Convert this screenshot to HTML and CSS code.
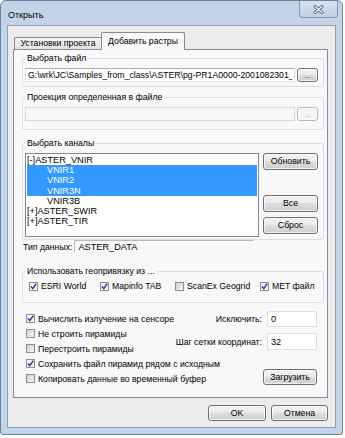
FILE: index.html
```html
<!DOCTYPE html>
<html lang="ru">
<head>
    <meta charset="UTF-8">
    <link rel="stylesheet" href="styles.css">
    <title>Открыть</title>
</head>
<body>

<div class="window">
    <div class="titlebar">
        <span class="title">Открыть</span>
        <div class="close">
            <svg width="11" height="9" viewBox="0 0 11 9">
                <path d="M2 1.5l7 6M9 1.5l-7 6" stroke="#55647a" stroke-width="3" stroke-linecap="round"/>
                <path d="M2 1.5l7 6M9 1.5l-7 6" stroke="#f4f6f8" stroke-width="1.3" stroke-linecap="round"/>
            </svg>
        </div>
    </div>

    <div class="client">
        <div class="tabs">
            <div class="tab">Установки проекта</div>
            <div class="tab active">Добавить растры</div>
        </div>

        <div class="panel">
            <fieldset class="group g-file">
                <legend>Выбрать файл</legend>
                <div class="file-row">
                    <input class="edit path" type="text" value="G:\wrk\JC\Samples_from_class\ASTER\pg-PR1A0000-2001082301_">
                    <button class="btn dots">...</button>
                </div>
            </fieldset>

            <fieldset class="group g-proj">
                <legend>Проекция определенная в файле</legend>
                <div class="file-row">
                    <input class="edit" type="text" disabled>
                    <button class="btn dots" disabled>...</button>
                </div>
            </fieldset>

            <fieldset class="group g-bands">
                <legend>Выбрать каналы</legend>
                <div class="bands-row">
                    <div class="listbox">
                        <div class="item">[-]ASTER_VNIR</div>
                        <div class="item sub sel">VNIR1</div>
                        <div class="item sub sel">VNIR2</div>
                        <div class="item sub sel">VNIR3N</div>
                        <div class="item sub">VNIR3B</div>
                        <div class="item">[+]ASTER_SWIR</div>
                        <div class="item">[+]ASTER_TIR</div>
                    </div>
                    <div class="band-buttons">
                        <button class="btn">Обновить</button>
                        <button class="btn push">Все</button>
                        <button class="btn">Сброс</button>
                    </div>
                </div>
            </fieldset>

            <div class="type-row">
                <span>Тип данных:</span>
                <input class="type-edit" type="text" value="ASTER_DATA" readonly>
            </div>

            <fieldset class="group g-geo">
                <legend>Использовать геопривязку из ...</legend>
                <div class="geo-row">
                    <label class="check"><span class="cb on"></span>ESRI World</label>
                    <label class="check"><span class="cb on"></span>Mapinfo TAB</label>
                    <label class="check"><span class="cb"></span>ScanEx Geogrid</label>
                    <label class="check"><span class="cb on"></span>MET файл</label>
                </div>
            </fieldset>

            <div class="options">
                <div class="opt-list">
                    <label class="check"><span class="cb on"></span>Вычислить излучение на сенсоре</label>
                    <label class="check"><span class="cb"></span>Не строить пирамиды</label>
                    <label class="check"><span class="cb"></span>Перестроить пирамиды</label>
                    <label class="check"><span class="cb on"></span>Сохранить файл пирамид рядом с исходным</label>
                    <label class="check"><span class="cb"></span>Копировать данные во временный буфер</label>
                </div>
                <div class="opt-fields">
                    <div class="field">
                        <span>Исключить:</span>
                        <input class="num" type="text" value="0">
                    </div>
                    <div class="field tall">
                        <span>Шаг сетки координат:</span>
                        <input class="num" type="text" value="32">
                    </div>
                    <button class="btn load">Загрузить</button>
                </div>
            </div>
        </div>

        <div class="footer">
            <button class="btn ok">OK</button>
            <button class="btn cancel">Отмена</button>
        </div>
    </div>
</div>

</body>
</html>
```

FILE: styles.css
```css
* {
    box-sizing: border-box;
}
body {
    margin: 0;
    background: #fff;
    font-family: "Liberation Sans", Arial, sans-serif;
    font-size: 8.7px;
    color: #000;
}
.window {
    width: 343px;
    height: 435px;
    border: 1px solid #6f8199;
    border-radius: 6px 6px 3px 3px;
    background: #c4d4e8;
}
.titlebar {
    height: 24px;
    display: flex;
    justify-content: space-between;
    align-items: flex-start;
}
.title {
    padding: 8px 0 0 7px;
    font-size: 9px;
    line-height: 12px;
}
.close {
    width: 39px;
    height: 17px;
    margin-right: 4px;
    border: 1px solid #8496ae;
    border-top: 0;
    border-radius: 0 0 4px 4px;
    background: linear-gradient(#d9e3f0, #c0cfe3);
    display: flex;
    justify-content: center;
    align-items: center;
}
.client {
    height: 403px;
    margin: 0 6px;
    padding: 6px 7px 0 5px;
    border: 1px solid #8d9db2;
    background: #ececec;
}

/* tabs */
.tabs {
    display: flex;
    align-items: flex-end;
    height: 17px;
    padding-left: 1px;
}
.tab {
    width: 87px;
    height: 12px;
    border: 1px solid #898c95;
    border-bottom: 0;
    border-right: 0;
    border-radius: 2px 0 0 0;
    background: linear-gradient(#f4f4f4, #e2e2e2);
    text-align: center;
    line-height: 11px;
}
.tab.active {
    width: 84px;
    height: 18px;
    margin-bottom: -1px;
    padding-top: 2px;
    border-right: 1px solid #898c95;
    border-radius: 2px 2px 0 0;
    background: #f8f8f8;
    line-height: 12px;
    position: relative;
    z-index: 1;
}
.panel {
    height: 349px;
    padding: 2px 3px 0 8px;
    border: 1px solid #898c95;
    background: #f8f8f8;
}

/* group boxes */
.group {
    margin: 0;
    min-width: 0;
    padding: 4px 5px 4px 2px;
    border: 1px solid #d5dfe5;
    border-radius: 3px;
}
.group legend {
    padding: 0 2px;
    line-height: 12px;
}
.g-proj {
    margin-top: 4px;
    padding-bottom: 8px;
}
.g-bands {
    margin-top: 7px;
    padding-bottom: 2px;
}
.g-geo {
    margin-top: 12px;
    padding-top: 3px;
    padding-bottom: 10px;
}

/* edits and buttons */
.file-row {
    display: flex;
    gap: 2px;
}
.edit {
    flex: 1;
    min-width: 0;
    height: 14px;
    padding: 0 2px;
    border: 1px solid;
    border-color: #abadb3 #e2e3ea #e3e9ef #dbdfe6;
    background: #fff;
    font: inherit;
    color: #000;
}
.edit:disabled {
    border-color: #d6dadf;
    background: #f8f8f8;
}
.btn {
    height: 16px;
    padding: 0;
    border: 1px solid #707070;
    border-radius: 3px;
    background: linear-gradient(#f2f2f2 0%, #ebebeb 45%, #dddddd 50%, #cfcfcf 100%);
    box-shadow: inset 0 0 0 1px rgba(255, 255, 255, 0.7);
    font: inherit;
    color: #000;
    line-height: 13px;
}
.btn:disabled {
    border-color: #b6babd;
    background: #f4f4f4;
    color: #9a9a9a;
}
.btn.dots {
    width: 21px;
    height: 14px;
    font-size: 7px;
    line-height: 14px;
}

/* channels */
.bands-row {
    display: flex;
    gap: 4px;
}
.listbox {
    width: 234px;
    height: 84px;
    padding-top: 1px;
    border: 1px solid #828790;
    background: #fff;
    font-size: 9.2px;
}
.item {
    margin: 0 1px;
    line-height: 10.2px;
    white-space: nowrap;
}
.item.sub {
    padding-left: 20px;
}
.item.sel {
    background: #3399ff;
    color: #fff;
}
.band-buttons {
    flex: 1;
    display: flex;
    flex-direction: column;
    gap: 5px;
    padding-bottom: 3px;
}
.band-buttons .btn {
    height: 17px;
}
.band-buttons .push {
    margin-top: auto;
}

.type-row {
    display: flex;
    align-items: center;
    height: 13px;
    padding-left: 1px;
    gap: 2px;
}
.type-edit {
    width: 180px;
    height: 13px;
    padding: 0 3px;
    border: 1px solid;
    border-color: #b9b9b9 transparent transparent #b9b9b9;
    background: transparent;
    font: inherit;
    font-size: 9.2px;
    color: #000;
}

/* checkboxes */
.check {
    display: flex;
    align-items: center;
    gap: 3px;
    white-space: nowrap;
}
.cb {
    flex: none;
    width: 9px;
    height: 9px;
    border: 1px solid #8e8f8f;
    background: linear-gradient(135deg, #cfd2d6, #f5f5f5);
}
.cb.on {
    background: #f3f4f6 url("data:image/svg+xml,%3Csvg xmlns='http://www.w3.org/2000/svg' width='7' height='7' viewBox='0 0 7 7'%3E%3Cpath d='M1 3.6l1.8 2L6.2 0.8' fill='none' stroke='%23253f94' stroke-width='1.5'/%3E%3C/svg%3E") center no-repeat;
}
.geo-row {
    display: grid;
    grid-template-columns: 71px 75px 85px auto;
    height: 12px;
    padding-left: 4px;
}

/* bottom options */
.options {
    display: flex;
    margin-top: 8px;
    padding: 0 7px 0 4px;
}
.opt-list {
    flex: 1;
    min-width: 0;
}
.opt-list .check {
    height: 15px;
}
.opt-fields {
    flex: none;
    display: flex;
    flex-direction: column;
    align-items: flex-end;
}
.field {
    display: flex;
    align-items: center;
    gap: 5px;
    white-space: nowrap;
}
.field.tall {
    margin-top: 6px;
}
.num {
    width: 50px;
    height: 16px;
    padding: 0 3px;
    border: 1px solid #dbe0e6;
    background: #fff;
    font: inherit;
    font-size: 9.2px;
    color: #000;
}
.field.tall .num {
    height: 17px;
}
.btn.load {
    width: 54px;
    margin-top: 19px;
}

.footer {
    display: flex;
    justify-content: flex-end;
    gap: 5px;
    margin-top: 7px;
}
.btn.ok {
    width: 58px;
}
.btn.cancel {
    width: 57px;
}
```
